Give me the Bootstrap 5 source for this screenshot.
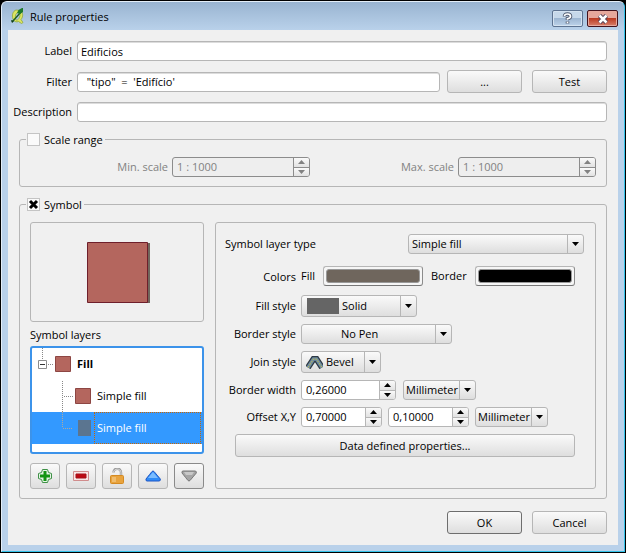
<!DOCTYPE html>
<html lang="en">
<head>
<meta charset="utf-8">
<meta name="viewport" content="width=device-width, initial-scale=1">
<title>Rule properties</title>
<link rel="stylesheet" href="https://cdn.jsdelivr.net/npm/bootstrap@5.3.0/dist/css/bootstrap.min.css">
<style>
:root { --line: #b6b6b6; --face: #f0f0f0; }
body { background: #000; color: #000; font: 11px/16px "Open Sans", "Noto Sans", Tahoma, sans-serif; padding: 1px; }
.win { min-height: calc(100vh - 2px); background: #b9d1ea; border: 1px solid #e4eef8; border-right-color: #35c3ea; border-bottom-color: #35c3ea; border-radius: 6px 6px 0 0; padding: 0 6px 6px; }
.titlebar { height: 28px; margin: 0 -6px; padding: 0 6px 0 8px; background: linear-gradient(#99b4d1, #b9d1ea); border-radius: 5px 5px 0 0; }
.titlebar h1 { font-size: 11px; line-height: 16px; padding-top: 2px; }
.cap-btn { width: 31px; height: 17px; padding: 0; border: 1px solid #5d7391; border-radius: 2px; background: linear-gradient(#c6d8ea 0 45%, #9db6d2 50%, #bdd3ea); box-shadow: inset 0 0 0 1px #d5e3f1; }
.cap-close { border-color: #43121c; background: linear-gradient(#e6a79b 0 45%, #bb3b22 50%, #d8806c); box-shadow: inset 0 0 0 1px #e6a99e; }
.pane { background: var(--face); padding: 11px; }
.form-rows { display: grid; grid-template-columns: 53px 1fr; gap: 9px 5px; align-items: center; }
.form-rows > label, .props > label { text-align: right; white-space: nowrap; justify-self: end; }
.field { width: 100%; min-width: 0; height: 20px; padding: 0 3px; border: 1px solid var(--line); border-radius: 3px; background: #fff; color: #000; box-shadow: inset 0 1px 0 #dcdcdc; }
.push { height: 23px; padding: 0; border: 1px solid var(--line); border-radius: 3px; background: linear-gradient(#fafafa, #dedede); color: #000; }
.push-w { width: 75px; }
.push-default { border-color: #6e6e6e; }
.group { margin-top: 11px; border: 1px solid var(--line); border-radius: 3px; padding: 11px 10px 9px; }
.group > legend { float: none; width: auto; height: 13px; margin: 0 0 0 -4px; padding: 0 2px 0 1px; font-size: 11px; line-height: 13px; }
.tick { appearance: none; width: 13px; height: 13px; margin: 0; border: 1px solid #c4c4c4; background: #fafafa; }
.tick:checked { background: #fafafa url("data:image/svg+xml,%3Csvg xmlns='http://www.w3.org/2000/svg' viewBox='0 0 11 11'%3E%3Cpath d='M2 2l7 7M9 2l-7 7' stroke='%23000' stroke-width='3'/%3E%3C/svg%3E") center/11px no-repeat; }
.spin { height: 20px; border: 1px solid var(--line); border-radius: 3px; background: #fff; overflow: hidden; }
.spin input { flex: 1 1 0; min-width: 0; border: 0; padding: 0 0 0 4px; background: none; color: inherit; }
.spin-keys { width: 16px; border-left: 1px solid var(--line); }
.spin-keys button { flex: 1 1 0; border: 0; padding: 0; display: flex; align-items: center; justify-content: center; background: linear-gradient(#fafafa, #e2e2e2); color: inherit; }
.spin-keys button + button { border-top: 1px solid var(--line); }
.dim { color: #828282; }
.dim .spin { width: 138px; background: #eee; border-color: #8c8c8c; }
.dim .spin-keys, .dim .spin-keys button + button { border-color: #8c8c8c; }
.combo { height: 20px; border: 1px solid var(--line); border-radius: 3px; background: linear-gradient(#fafafa, #dedede); }
.combo-tall { height: 22px; }
.combo select { appearance: none; flex: 1 1 0; min-width: 0; border: 0; padding: 0 16px 0 3px; background: linear-gradient(var(--line), var(--line)) right 15px top/1px 100% no-repeat, url("data:image/svg+xml,%3Csvg xmlns='http://www.w3.org/2000/svg' viewBox='0 0 7 4'%3E%3Cpath d='M0 0h7L3.5 4z'/%3E%3C/svg%3E") right 4px center/7px 4px no-repeat; color: #000; }
.frame { border: 1px solid var(--line); border-radius: 3px; }
.side { width: 174px; }
.preview { height: 100px; }
.caption { height: 24px; padding-top: 5px; }
.tree { border: 2px solid #3c93ea; border-radius: 3px; background: #fff; height: 108px; }
.tree li { height: 32px; }
.tree .picked { background: #3399ff; color: #fff; }
.node-text { padding-left: 6px; }
.picked .node-text { height: 32px; margin: 0 1px 0 3px; padding: 7px 0 0 2px; border: 1px dotted #cc6600; }
.tool { width: 30px; height: 26px; }
.tool-down { border-color: #8a8a8a; }
.inspector { padding: 11px 11px 0 9px; }
.props { display: grid; grid-template-columns: 71px 1fr; gap: 7px 5px; align-items: center; margin-top: 12px; }
.colors-row { padding-bottom: 2px; }
.swatch { width: 100px; height: 20px; padding: 2px; border: 1px solid var(--line); border-bottom-color: #777; border-right-color: #8c8c8c; border-radius: 3px; background: #f6f6f6; }
.swatch::-webkit-color-swatch-wrapper { padding: 0; }
.swatch::-webkit-color-swatch { border: 1px solid #999; border-radius: 3px; }
.w-type { width: 176px; } .w-fill { width: 116px; } .w-pen { width: 151px; } .w-join { width: 80px; }
.w-unit { width: 73px; } .w-width { width: 95px; } .w-offset { width: 81px; }
.combo.indent-pen select { padding-left: 39px; }
.combo.w-unit select { padding: 0 12px 0 2px; }
.data-btn { margin: 7px 9px 0 10px; }
.gap-6 { gap: 6px; } .gap-7 { gap: 7px; } .gap-10 { gap: 10px; } .gap-11 { gap: 11px; }
.mt-9 { margin-top: 9px; } .mt-12 { margin-top: 12px; }
</style>
<script src="https://cdn.jsdelivr.net/npm/bootstrap@5.3.0/dist/js/bootstrap.bundle.min.js"></script>
</head>
<body>
<svg class="d-none" aria-hidden="true">
  <symbol id="up" viewBox="0 0 7 4"><path d="M0 4h7L3.5 0z" fill="currentColor"/></symbol>
  <symbol id="down" viewBox="0 0 7 4"><path d="M0 0h7L3.5 4z" fill="currentColor"/></symbol>
</svg>
<main class="win">
  <header class="titlebar d-flex align-items-center">
    <svg width="16" height="16" viewBox="0 0 16 16" aria-hidden="true">
      <path d="M6 2C3 3 1.500 7 3 11c1 2.500 3.500 3.500 5.500 2.500l3 2 1.500-1-2-3c2.500-3 2-7-.5-9z" fill="#dbe561" stroke="#8fa63a" stroke-width=".8"/>
      <path d="M7 5c-2 1-2 5-1 7 2 1 4-3 4-5s-1-3-3-2z" fill="#a9c4e0" stroke="#8ea52c" stroke-width=".7"/>
      <path d="M2 14L11 4" stroke="#1c5d22" stroke-width="1.400"/><path d="M7 5l1.500-3L12 0h1v4l-3 2z" fill="#1d7a2a"/><path d="M1 12l3 1-2 2z" fill="#123f18"/>
    </svg>
    <h1 class="mb-0 ms-1 fw-normal flex-fill">Rule properties</h1>
    <div class="d-flex gap-1 pt-2 align-self-start">
      <button class="cap-btn d-flex align-items-center justify-content-center" type="button" aria-label="Help"><svg width="11" height="13" viewBox="0 0 11 13"><path d="M2.500 4.500Q2.500 2 5.500 2t3 2.400Q8.500 5.800 5.500 6.700v1.300M5.500 9.500v2" fill="none" stroke="#535d72" stroke-width="3.600"/><path d="M2.500 4.100Q2.500 2 5.500 2t3 2.400Q8.500 5.800 5.500 6.700v1.100M5.500 9.700v1.600" fill="none" stroke="#fff" stroke-width="1.700"/></svg></button>
      <button class="cap-btn cap-close d-flex align-items-center justify-content-center" type="button" aria-label="Close"><svg width="12" height="10" viewBox="0 0 12 10"><path d="M2.500 1.500l7 7M9.500 1.500l-7 7" stroke="#53445a" stroke-width="4.500"/><path d="M2.500 1.500l7 7M9.500 1.500l-7 7" stroke="#fff" stroke-width="2.500"/></svg></button>
    </div>
  </header>
  <form class="pane">
    <div class="form-rows">
      <label for="lab">Label</label>
      <input id="lab" class="field" type="text" value="Edificios">
      <label for="filt">Filter</label>
      <div class="d-flex align-items-center gap-10">
        <div class="d-flex align-items-center gap-7 flex-fill">
          <input id="filt" class="field" type="text" value="  &quot;tipo&quot;  =  'Edifício'">
          <button class="push push-w flex-shrink-0" type="button">...</button>
        </div>
        <button class="push push-w" type="button">Test</button>
      </div>
      <label for="desc">Description</label>
      <input id="desc" class="field" type="text">
    </div>

    <fieldset class="group">
      <legend><label class="d-flex align-items-center gap-1"><input class="tick" type="checkbox">Scale range</label></legend>
      <div class="d-flex gap-6 dim">
        <div class="d-flex flex-fill align-items-center justify-content-end w-50">
          <label class="me-1" for="mins">Min. scale</label>
          <div class="spin d-flex"><input id="mins" type="text" value="1 : 1000" disabled>
            <div class="spin-keys d-flex flex-column"><button type="button" aria-label="Increase" disabled><svg width="7" height="4"><use href="#up"/></svg></button><button type="button" aria-label="Decrease" disabled><svg width="7" height="4"><use href="#down"/></svg></button></div></div>
        </div>
        <div class="d-flex flex-fill align-items-center justify-content-end w-50">
          <label class="me-1" for="maxs">Max. scale</label>
          <div class="spin d-flex"><input id="maxs" type="text" value="1 : 1000" disabled>
            <div class="spin-keys d-flex flex-column"><button type="button" aria-label="Increase" disabled><svg width="7" height="4"><use href="#up"/></svg></button><button type="button" aria-label="Decrease" disabled><svg width="7" height="4"><use href="#down"/></svg></button></div></div>
        </div>
      </div>
    </fieldset>

    <fieldset class="group">
      <legend><label class="d-flex align-items-center gap-1"><input class="tick" type="checkbox" checked>Symbol</label></legend>
      <div class="d-flex gap-11">
        <div class="side flex-shrink-0">
          <div class="frame preview d-flex align-items-center justify-content-center">
            <svg width="66" height="62" viewBox="0 0 66 62" role="img" aria-label="Symbol preview"><path d="M5 2h61v60H5z" fill="#6f665d"/><path d="M3.500 1.500h60v60h-60z" fill="#b4665e" stroke="#6e1f2b"/></svg>
          </div>
          <div class="caption">Symbol layers</div>
          <ul class="tree list-unstyled mb-0" role="tree" aria-label="Symbol layers">
            <li class="d-flex align-items-center" role="treeitem">
              <svg width="39" height="32" viewBox="0 0 39 32"><path d="M10.500 0v11M16 16.500h6" stroke="#888" stroke-dasharray="1 1" fill="none"/><path d="M6.500 12.500h8v8h-8z" fill="#fff" stroke="#8c8c8c"/><path d="M8 16.500h5" stroke="#333"/><path d="M23.500 8.500h15v15h-15z" fill="#b4665e" stroke="#8d4643"/></svg>
              <b class="node-text">Fill</b>
            </li>
            <li class="d-flex align-items-center" role="treeitem">
              <svg width="59" height="32" viewBox="0 0 59 32"><path d="M30.500 1v31M32 16.500h9" stroke="#888" stroke-dasharray="1 1" fill="none"/><path d="M43.500 8.500h15v15h-15z" fill="#b4665e" stroke="#8d4643"/></svg>
              <span class="node-text">Simple fill</span>
            </li>
            <li class="d-flex align-items-center picked" role="treeitem" aria-selected="true">
              <svg class="flex-shrink-0" width="59" height="32" viewBox="0 0 59 32"><path d="M30.500 0v16M31 16.500h10" stroke="#b0a99c" stroke-dasharray="1 1" fill="none"/><path d="M46 8h13v16H46z" fill="#5b7590"/></svg>
              <span class="node-text flex-fill">Simple fill</span>
            </li>
          </ul>
          <div class="d-flex gap-6 mt-9">
            <button class="push tool d-flex align-items-center justify-content-center" type="button" aria-label="Add layer"><svg width="16" height="16" viewBox="0 0 16 16"><path d="M5.500 1.500h5l1 3 3 1v5l-3 1-1 3h-5l-1-3-3-1v-5l3-1z" fill="#e5f3e5" stroke="#3f9147"/><path d="M8 3v10M3 8h10" stroke="#129412" stroke-width="3"/></svg></button>
            <button class="push tool d-flex align-items-center justify-content-center" type="button" aria-label="Remove layer"><svg width="16" height="16" viewBox="0 0 16 16"><path d="M.5 3.500h15v9H.5z" fill="#f8e4e4" stroke="#d08c8c"/><path d="M3 6h10v4H3z" fill="#bd0812" stroke="#a3131b"/></svg></button>
            <button class="push tool d-flex align-items-center justify-content-center" type="button" aria-label="Lock layer"><svg width="16" height="16" viewBox="0 0 16 16"><path d="M4.500 4.500C4.500-.5 12-.5 12 4.500V9" fill="none" stroke="#999" stroke-width="2.400"/><path d="M4.500 4.500C4.500 0 12 0 12 4.500V9" fill="none" stroke="#ddd"/><rect x="1.500" y="7.500" width="13" height="8" rx="1" fill="#e8a33d" stroke="#d48a22"/><path d="M3 9h4v5H3z" fill="#f0bc6c"/></svg></button>
            <button class="push tool d-flex align-items-center justify-content-center" type="button" aria-label="Move up"><svg width="16" height="16" viewBox="0 0 16 16"><path d="M1 11Q5 6 7 3.500q1-1 2 0Q12 7 15.300 11q.4 2-1.300 2H2q-1.500 0-1-2z" fill="#2f8bf7" stroke="#1d55c4"/><path d="M3 10l5-6 5 6z" fill="#7bbcff"/></svg></button>
            <button class="push tool tool-down d-flex align-items-center justify-content-center" type="button" aria-label="Move down"><svg width="16" height="16" viewBox="0 0 16 16"><path d="M1 5Q5 10 7 12.500q1 1 2 0Q12 9 15.300 5q.4-2-1.300-2H2Q.5 3 1 5z" fill="#a5a5a5" stroke="#777"/><path d="M3 4h10l-2 3H5z" fill="#c8c8c8"/></svg></button>
          </div>
        </div>

        <div class="frame inspector flex-fill">
          <div class="d-flex align-items-center justify-content-between">
            <label for="ltype">Symbol layer type</label>
            <div class="combo d-flex w-type"><select id="ltype"><option>Simple fill</option></select></div>
          </div>
          <div class="props">
            <label for="cfill">Colors</label>
            <div class="d-flex align-items-center gap-2 colors-row">
              <label for="cfill">Fill</label>
              <input id="cfill" class="swatch" type="color" value="#6f665d">
              <label for="cborder">Border</label>
              <input id="cborder" class="swatch" type="color" value="#000000">
            </div>
            <label for="fstyle">Fill style</label>
            <div class="combo combo-tall d-flex align-items-center w-fill"><svg class="ms-1" width="33" height="16" viewBox="0 0 33 16"><path d="M1 0h32v16H1z" fill="#656565"/></svg><select id="fstyle" class="h-100"><option>Solid</option></select></div>
            <label for="bstyle">Border style</label>
            <div class="combo d-flex w-pen indent-pen"><select id="bstyle"><option>No Pen</option></select></div>
            <label for="jstyle">Join style</label>
            <div class="combo combo-tall d-flex align-items-center w-join"><svg class="ms-1" width="17" height="14" viewBox="0 0 17 14"><path d="M2 12.500L7.500 4h3L16 12.500" fill="none" stroke="#2e3a44" stroke-width="6"/><path d="M2 12.500L7.500 4h3L16 12.500" fill="none" stroke="#6d8ba3" stroke-width="3.500"/><path d="M2 12.500L7.500 4h3L16 12.500" fill="none" stroke="#c6bf4e" stroke-dasharray="2 1"/></svg><select id="jstyle" class="h-100"><option>Bevel</option></select></div>
            <label for="bwidth">Border width</label>
            <div class="d-flex gap-7">
              <div class="spin d-flex w-width"><input id="bwidth" type="text" value="0,26000"><div class="spin-keys d-flex flex-column"><button type="button" aria-label="Increase"><svg width="7" height="4"><use href="#up"/></svg></button><button type="button" aria-label="Decrease"><svg width="7" height="4"><use href="#down"/></svg></button></div></div>
              <div class="combo d-flex w-unit"><select aria-label="Border width unit"><option>Millimeter</option></select></div>
            </div>
            <label for="offx">Offset X,Y</label>
            <div class="d-flex gap-6">
              <div class="spin d-flex w-offset"><input id="offx" type="text" value="0,70000"><div class="spin-keys d-flex flex-column"><button type="button" aria-label="Increase"><svg width="7" height="4"><use href="#up"/></svg></button><button type="button" aria-label="Decrease"><svg width="7" height="4"><use href="#down"/></svg></button></div></div>
              <div class="spin d-flex w-offset"><input aria-label="Offset Y" type="text" value="0,10000"><div class="spin-keys d-flex flex-column"><button type="button" aria-label="Increase"><svg width="7" height="4"><use href="#up"/></svg></button><button type="button" aria-label="Decrease"><svg width="7" height="4"><use href="#down"/></svg></button></div></div>
              <div class="combo d-flex w-unit"><select aria-label="Offset unit"><option>Millimeter</option></select></div>
            </div>
          </div>
          <div class="data-btn d-grid"><button class="push" type="button">Data defined properties...</button></div>
        </div>
      </div>
    </fieldset>

    <div class="d-flex justify-content-end gap-10 mt-12">
      <button class="push push-w push-default" type="button">OK</button>
      <button class="push push-w" type="button">Cancel</button>
    </div>
  </form>
</main>
</body>
</html>
